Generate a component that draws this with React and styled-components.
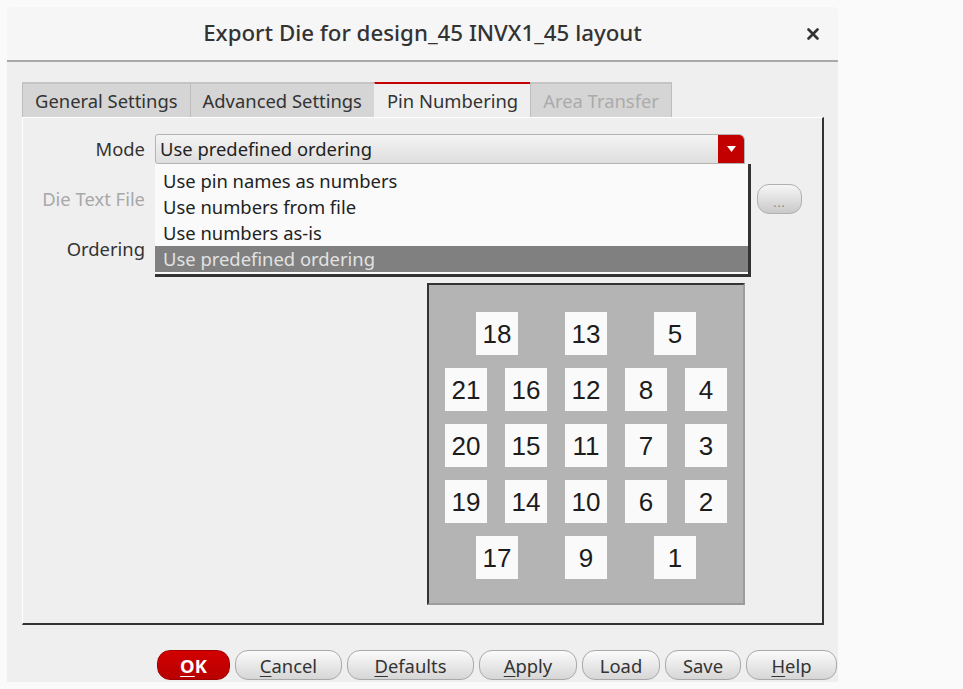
import React from 'react'
import styled, { createGlobalStyle } from 'styled-components'

const GlobalStyle = createGlobalStyle`
    html, body {
        margin: 0;
        padding: 0;
        background: #fafafa;
    }
    body {
        font-family: "Noto Sans", "Open Sans", sans-serif;
        font-size: 18.4px;
        color: #333;
    }
`

const Dialog = styled.div`
    width: 831px;
    height: 675px;
    margin: 7px 0 0 7px;
    background: #efefef;
    border-radius: 6px 6px 0 0;
    display: flex;
    flex-direction: column;
    box-sizing: border-box;
`

const TitleBar = styled.div`
    height: 53px;
    display: grid;
    grid-template-columns: 1fr auto 1fr;
    align-items: center;
    background: #f6f6f6;
    border-bottom: 2px solid #a8a8a8;
    border-radius: 6px 6px 0 0;
`

const Title = styled.h1`
    grid-column: 2;
    margin: 0 0 2px;
    font-size: 22.3px;
    font-weight: 500;
    color: #333;
`

const CloseButton = styled.div`
    justify-self: end;
    margin-right: 19px;
    display: flex;
    align-items: center;
`

const Body = styled.div`
    padding: 20px 14px 0 15px;
`

const TabBar = styled.div`
    display: flex;
    height: 35px;
`

const Tab = styled.div`
    display: flex;
    align-items: center;
    padding: 0 12px;
    box-sizing: border-box;
    color: ${({ disabled }) => (disabled ? '#ababab' : '#333')};
    background: ${({ active }) => (active ? '#efefef' : '#d5d5d5')};
    border-top: 2px solid ${({ active }) => (active ? '#c40000' : '#c4c4c4')};
    border-left: 1px solid ${({ active }) => (active ? '#efefef' : '#bdbdbd')};
    ${({ disabled }) => disabled && 'border-right: 1px solid #bdbdbd;'}
`

const Panel = styled.div`
    height: 508px;
    box-sizing: border-box;
    border-top: 1px solid #fff;
    border-left: 1px solid #fff;
    border-right: 2px solid #333;
    border-bottom: 2px solid #333;
    padding: 16px 18px 0 0;
`

const Form = styled.div`
    display: grid;
    grid-template-columns: 122px 590px 47px;
    grid-template-rows: 30px 30px 30px auto;
    column-gap: 10px;
    row-gap: 20px;
    align-items: center;
`

const Label = styled.div`
    text-align: right;
    margin-top: -2px;
    color: ${({ disabled }) => (disabled ? '#a8a8a8' : '#333')};
`

const ComboWrap = styled.div`
    position: relative;
    height: 30px;
`

const Combo = styled.div`
    display: flex;
    align-items: center;
    height: 30px;
    box-sizing: border-box;
    border: 1px solid #b4b4b4;
    border-radius: 3px 6px 0 3px;
    background: linear-gradient(#f4f4f4, #dedede);
    overflow: hidden;
`

const ComboText = styled.div`
    flex: 1;
    padding-left: 4px;
    margin-top: -2px;
    color: #222;
`

const ComboArrow = styled.div`
    width: 26px;
    height: 100%;
    background: #c20000;
    display: flex;
    align-items: center;
    justify-content: center;
`

const DropList = styled.ul`
    position: absolute;
    top: 30px;
    left: 0;
    width: 596px;
    margin: 0;
    padding: 4px 0 2px;
    list-style: none;
    background: #fafafa;
    box-sizing: border-box;
    border-right: 3px solid #333;
    border-bottom: 3px solid #333;
    z-index: 2;
`

const DropItem = styled.li`
    height: 26px;
    line-height: 26px;
    padding-left: 8px;
    color: ${({ selected }) => (selected ? '#e2e2e2' : '#222')};
    background: ${({ selected }) => (selected ? '#808080' : 'transparent')};
`

const Field = styled.div`
    height: 28px;
    border: 1px solid #c0c0c0;
    background: #f4f4f4;
`

const DotsButton = styled.div`
    margin-left: 2px;
    height: 30px;
    box-sizing: border-box;
    border: 1px solid #b0b0b0;
    border-radius: 12px;
    background: linear-gradient(#f6f6f6, #c9c9c9);
    color: #888;
    font-size: 12px;
    display: flex;
    align-items: center;
    justify-content: center;
    padding-top: 6px;
    letter-spacing: 1px;
`

const PinBox = styled.div`
    grid-column: 2;
    justify-self: end;
    margin-top: -1px;
    width: 318px;
    height: 322px;
    box-sizing: border-box;
    border-top: 2px solid #333;
    border-left: 2px solid #333;
    border-right: 2px solid #9c9c9c;
    border-bottom: 2px solid #9c9c9c;
    background: #b4b4b4;
    padding: 27px 0 0 0;
    display: flex;
    flex-direction: column;
    gap: 13px;
`

const PinRow = styled.div`
    display: flex;
    justify-content: center;
    gap: ${({ sparse }) => (sparse ? '47px' : '18px')};
`

const Pin = styled.div`
    width: 42px;
    height: 43px;
    background: #fafafa;
    display: flex;
    align-items: center;
    justify-content: center;
    padding-top: 2px;
    box-sizing: border-box;
    font-family: "Liberation Sans", Arial, sans-serif;
    font-size: 26px;
    color: #1c1c1c;
`

const Footer = styled.div`
    display: flex;
    justify-content: flex-end;
    gap: 5px;
    padding: 25px 1px 0 0;
`

const Button = styled.div`
    width: ${({ w }) => w}px;
    height: 30px;
    box-sizing: border-box;
    border-radius: 13px;
    border: 1px solid ${({ primary }) => (primary ? '#a00000' : '#a9a9a9')};
    background: ${({ primary }) =>
        primary ? 'linear-gradient(#d20000, #b80000)' : 'linear-gradient(#fbfbfb, #d6d6d6)'};
    color: ${({ primary }) => (primary ? '#fff' : '#333')};
    font-weight: ${({ primary }) => (primary ? 700 : 400)};
    display: flex;
    align-items: center;
    justify-content: center;

    & u {
        text-underline-offset: 3px;
    }
`

const pinRows = [
    { sparse: true, pins: [18, 13, 5] },
    { pins: [21, 16, 12, 8, 4] },
    { pins: [20, 15, 11, 7, 3] },
    { pins: [19, 14, 10, 6, 2] },
    { sparse: true, pins: [17, 9, 1] },
]

const modes = ['Use pin names as numbers', 'Use numbers from file', 'Use numbers as-is', 'Use predefined ordering']

export default function App() {
    return (
        <>
            <GlobalStyle />
            <Dialog>
                <TitleBar>
                    <Title>Export Die for design_45 INVX1_45 layout</Title>
                    <CloseButton>
                        <svg width="12" height="12" viewBox="0 0 12 12">
                            <path d="M1.5 1.5 L10.5 10.5 M10.5 1.5 L1.5 10.5" stroke="#333" strokeWidth="2.6" strokeLinecap="round" />
                        </svg>
                    </CloseButton>
                </TitleBar>
                <Body>
                    <TabBar>
                        <Tab>General Settings</Tab>
                        <Tab>Advanced Settings</Tab>
                        <Tab active>Pin Numbering</Tab>
                        <Tab disabled>Area Transfer</Tab>
                    </TabBar>
                    <Panel>
                        <Form>
                            <Label>Mode</Label>
                            <ComboWrap>
                                <Combo>
                                    <ComboText>Use predefined ordering</ComboText>
                                    <ComboArrow>
                                        <svg width="9" height="6" viewBox="0 0 9 6">
                                            <path d="M0 0 H9 L4.5 6 Z" fill="#fff" />
                                        </svg>
                                    </ComboArrow>
                                </Combo>
                                <DropList>
                                    {modes.map((m, i) => (
                                        <DropItem key={m} selected={i === 3}>
                                            {m}
                                        </DropItem>
                                    ))}
                                </DropList>
                            </ComboWrap>
                            <div />

                            <Label disabled>Die Text File</Label>
                            <Field />
                            <DotsButton>...</DotsButton>

                            <Label>Ordering</Label>
                            <Field />
                            <div />

                            <PinBox>
                                {pinRows.map((row, i) => (
                                    <PinRow key={i} sparse={row.sparse}>
                                        {row.pins.map((p) => (
                                            <Pin key={p}>{p}</Pin>
                                        ))}
                                    </PinRow>
                                ))}
                            </PinBox>
                        </Form>
                    </Panel>
                </Body>
                <Footer>
                    <Button primary w={73}>
                        <span>
                            <u>O</u>K
                        </span>
                    </Button>
                    <Button w={107}>
                        <span>
                            <u>C</u>ancel
                        </span>
                    </Button>
                    <Button w={127}>
                        <span>
                            <u>D</u>efaults
                        </span>
                    </Button>
                    <Button w={98}>
                        <span>
                            <u>A</u>pply
                        </span>
                    </Button>
                    <Button w={78}>Load</Button>
                    <Button w={76}>Save</Button>
                    <Button w={91}>
                        <span>
                            <u>H</u>elp
                        </span>
                    </Button>
                </Footer>
            </Dialog>
        </>
    )
}
